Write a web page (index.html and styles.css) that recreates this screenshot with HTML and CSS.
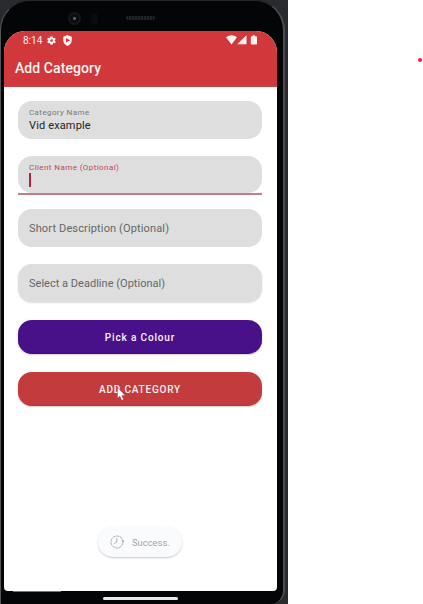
FILE: index.html
```html
<!DOCTYPE html>
<html lang="en">
<head>
<meta charset="utf-8">
<title>Add Category</title>
<link rel="stylesheet" href="styles.css">
</head>
<body>
<div class="backdrop">
  <div class="phone">
    <div class="bezel-top">
      <span class="camera"></span>
      <span class="sensor"></span>
      <span class="speaker"></span>
    </div>
    <main class="screen">
      <header class="header">
        <div class="status">
          <span class="time">8:14</span>
          <svg class="gear" viewBox="2 2 20 20" width="9" height="9"><path fill="currentColor" fill-rule="evenodd" d="M19.4 13a7.800 7.800 0 0 0 0-2l2.100-1.600-2-3.500-2.500 1a7 7 0 0 0-1.700-1L15 3H9l-.4 2.900a7 7 0 0 0-1.700 1l-2.500-1-2 3.500L4.600 11a7.800 7.800 0 0 0 0 2l-2.100 1.600 2 3.500 2.500-1a7 7 0 0 0 1.700 1L9 21h6l.4-2.900a7 7 0 0 0 1.700-1l2.500 1 2-3.500zM12 15a3 3 0 1 1 0-6 3 3 0 0 1 0 6z"/></svg>
          <svg class="shield" viewBox="0 0 18 22" width="9" height="11"><path fill="currentColor" fill-rule="evenodd" d="M9 0l8.500 3.500V11c0 5-3.500 9-8.500 11C4 20 .5 16 .5 11V3.500zM6 6v9l8-4.500z"/></svg>
          <svg class="signals" viewBox="0 0 32 10" width="32" height="10"><path fill="currentColor" d="M0 2.200Q5.500-1.500 11 2.200L5.500 9.500zM20.500.2v9h-9.400zM26.600.2h2.200v1h1.500q.7 0 .7.700v6.800q0 .7-.7.700h-4.800q-.7 0-.7-.7V1.900q0-.7.7-.7h1.100z"/></svg>
        </div>
        <h1>Add Category</h1>
      </header>
      <form class="form">
        <div class="field filled"><label>Category Name</label><span class="value">Vid example</span></div>
        <div class="focus-wrap"><div class="field filled focused"><label>Client Name (Optional)</label><span class="caret"></span></div></div>
        <div class="field"><span class="hint">Short Description (Optional)</span></div>
        <div class="field last"><span class="hint deadline">Select a Deadline (Optional)</span></div>
        <button type="button" class="pick"><span>Pick a Colour</span></button>
        <button type="button" class="add"><span>ADD CATEGORY</span></button>
      </form>
      <div class="toast">
        <svg viewBox="0 0 14 14" width="14" height="14"><circle cx="7" cy="7" r="6" fill="none" stroke="#9c999e" stroke-width=".8" stroke-dasharray="3.200 .6"/><path d="M6.800 3.200V7L4.300 8.500M11.600 5.400l1.300 1.200.9-1.400" fill="none" stroke="#9c999e" stroke-width=".8"/></svg>
        <span>Success.</span>
      </div>
    </main>
    <div class="nav"><i></i><span></span></div>
  </div>
  <svg class="cursor" viewBox="0 0 9 14" width="9" height="14"><path d="M.5.5v10.800l2.400-2.200 1.700 4.200 1.900-.8-1.700-4h3.400z" fill="#fff" stroke="#555" stroke-width=".4"/></svg>
</div>
<span class="record"></span>
</body>
</html>
```
FILE: styles.css
```css
* { box-sizing: border-box; }
body {
  margin: 0;
  height: 604px;
  overflow: hidden;
  background: #fff;
  font-family: Roboto, sans-serif;
}
.backdrop {
  position: relative;
  width: 288px;
  height: 604px;
  background: #292a2d;
}
.phone {
  width: 285px;
  height: 604px;
  padding: 0 6px 0 3px;
  background: #040506;
  border: 1px solid #55585a;
  border-right: 2px solid #4b4d50;
  border-top-color: #242628;
  border-bottom: 0;
  border-radius: 30px 30px 14px 0;
}
.bezel-top {
  display: flex;
  align-items: center;
  height: 30px;
  padding: 5px 0 0 64px;
}
.camera {
  width: 13px;
  height: 13px;
  border-radius: 50%;
  background: radial-gradient(circle, #5a6066 0 1px, #0b0d10 2px 4px, #141618 5px);
}
.sensor {
  width: 7px;
  height: 12px;
  margin-left: 10px;
  border-radius: 4px;
  background: #0a0b0d;
}
.speaker {
  width: 29px;
  height: 4px;
  margin-left: 28px;
  margin-top: -1px;
  border-radius: 2px;
  background: repeating-linear-gradient(90deg, #222325 0 2px, #111214 2px 3px);
}
.screen {
  display: flex;
  flex-direction: column;
  width: 273px;
  height: 560px;
  background: #fff;
  border-radius: 21px 21px 4px 4px;
  overflow: hidden;
}
.header {
  height: 56px;
  flex: none;
  padding: 3px 20px 0 11px;
  background: #d1383b;
  border-bottom: 1px solid #c4484a;
  color: #fff3f1;
}
.status {
  display: flex;
  align-items: center;
  height: 12px;
  padding-left: 8px;
}
.time { font-size: 10px; width: 20px; }
.gear { margin-left: 4px; }
.shield { margin-left: 7px; }
.signals { margin-left: auto; margin-right: -1px; }
h1 {
  margin: 13px 0 0;
  font-size: 14px;
  line-height: 18px;
  font-weight: 500;
  letter-spacing: .08px;
}
.form {
  display: flex;
  flex-direction: column;
  padding: 14px 15px 0 14px;
}
.field {
  display: flex;
  flex-direction: column;
  justify-content: center;
  height: 38px;
  margin-bottom: 17px;
  padding: 0 11px;
  border-radius: 14px;
  background: #dedede;
}
.field.filled { justify-content: flex-start; padding-top: 7px; }
.focus-wrap {
  height: 39px;
  margin-bottom: 14px;
  border-bottom: 2px solid #c47c85;
}
.focus-wrap .field { height: 37px; margin: 0; }
.field label {
  font-size: 8px;
  line-height: 10px;
  letter-spacing: .4px;
  color: #77777a;
}
.field.focused label { color: #bd4857; letter-spacing: .42px; }
.value { font-size: 11px; line-height: 16px; letter-spacing: .14px; color: #222; }
.caret { width: 1.5px; height: 14px; flex: none; background: #b5213b; }
.hint { font-size: 11px; letter-spacing: .14px; color: #666668; }
.deadline { letter-spacing: .02px; }
.field.last { margin-bottom: 18px; box-shadow: 0 1px 2px #ddd; }
button {
  height: 34px;
  margin: 0 0 18px;
  padding: 2px 0 0;
  border: 0;
  border-radius: 14px;
  color: #fff0f3;
  font: 500 10px Roboto, sans-serif;
  letter-spacing: .85px;
  box-shadow: 0 1px 2px #ccc;
}
.pick { background: #48118a; border-bottom: 1px solid #400a80; }
.add { background: #c43b3d; border-bottom: 1px solid #bd2f32; letter-spacing: .8px; }
.toast {
  display: flex;
  align-items: center;
  align-self: center;
  gap: 8px;
  width: 84px;
  height: 30px;
  margin: auto 1px 34px 0;
  padding-left: 12px;
  border-radius: 15px;
  background: #fafbfd;
  box-shadow: 0 1px 2px #c8c9ce;
  font-size: 9.5px;
  letter-spacing: -.05px;
  color: #a4a4a8;
}
.nav {
  display: grid;
  justify-items: center;
  row-gap: 5px;
}
.nav i {
  justify-self: start;
  width: 48px;
  height: 1px;
  margin-left: 9px;
  background: #777;
}
.nav span {
  width: 75px;
  height: 3px;
  margin-right: 1px;
  border-radius: 2px;
  background: #e9e9e9;
}
.cursor { position: absolute; left: 117px; top: 387px; }
.record {
  position: absolute;
  left: 418px;
  top: 58px;
  width: 4px;
  height: 4px;
  border-radius: 50%;
  background: #f5222a;
}
```
